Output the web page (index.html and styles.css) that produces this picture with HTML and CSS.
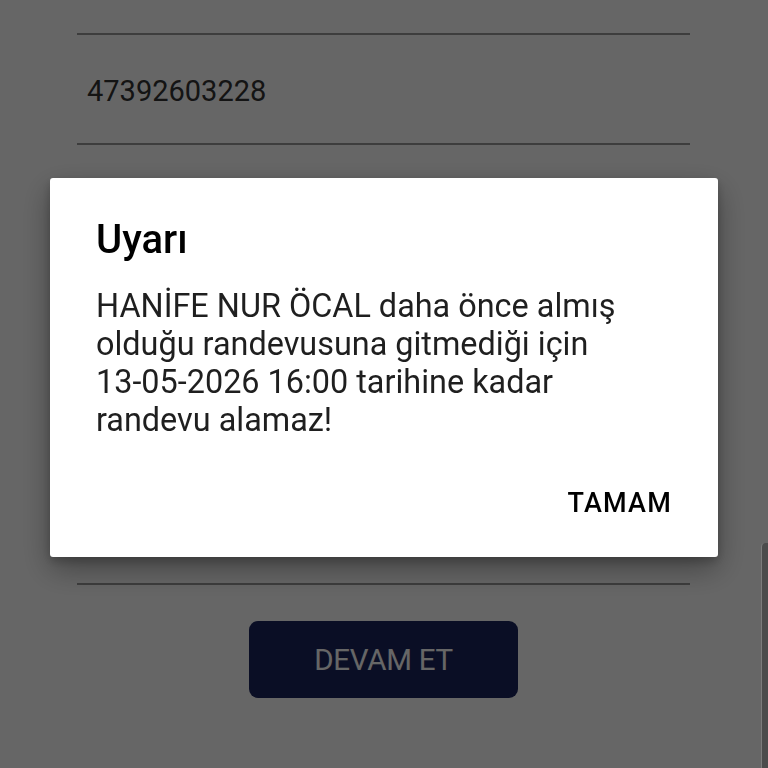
FILE: index.html
```html
<!DOCTYPE html>
<html lang="tr">
<head>
<meta charset="utf-8">
<title>Randevu</title>
<link rel="stylesheet" href="styles.css">
</head>
<body>
<main class="form">
  <div class="field field-top"></div>
  <div class="field field-value"><span class="value">47392603228</span></div>
  <div class="field"></div>
  <div class="field"></div>
  <div class="field"></div>
  <div class="field"></div>
  <div class="actions-row"><button class="btn-primary">DEVAM ET</button></div>
</main>
<div class="scrim"></div>
<div class="edge-panel"></div>
<div class="dialog" role="alertdialog">
  <h2 class="dialog-title">Uyarı</h2>
  <p class="dialog-body">HANİFE NUR ÖCAL daha önce almış<br>olduğu randevusuna gitmediği için<br>13-05-2026 16:00 tarihine kadar<br>randevu alamaz!</p>
  <div class="dialog-actions"><button class="dialog-btn">TAMAM</button></div>
</div>
</body>
</html>
```
FILE: styles.css
```css
html, body {
  margin: 0;
  padding: 0;
  height: 768px;
  overflow: hidden;
  background: #ffffff;
  font-family: Roboto, "Noto Sans", "Liberation Sans", sans-serif;
}

.form {
  padding: 0 78px 0 77px;
  display: flex;
  flex-direction: column;
}

.field {
  height: 108px;
  border-bottom: 2px solid #9a9a9a;
  display: flex;
  align-items: center;
}

.field-top {
  height: 33px;
}

.value {
  padding-left: 10px;
  padding-top: 4px;
  font-size: 29px;
  color: #333333;
}

.actions-row {
  display: flex;
  justify-content: center;
  margin-top: 36px;
}

.btn-primary {
  width: 269px;
  height: 77px;
  border: none;
  border-radius: 9px;
  background: #1b255e;
  color: #ffffff;
  font-family: Roboto, "Liberation Sans", sans-serif;
  font-size: 29.5px;
  letter-spacing: -0.3px;
  padding-top: 2px;
}

.scrim {
  position: fixed;
  inset: 0;
  background: rgba(0, 0, 0, 0.6);
}

.edge-panel {
  position: fixed;
  left: 761px;
  top: 543px;
  width: 7px;
  height: 225px;
  border-left: 1px solid #7c7c7c;
  border-top-left-radius: 4px;
  background: #4c4c4c;
}

.dialog {
  position: fixed;
  left: 50px;
  top: 178px;
  width: 668px;
  height: 379px;
  box-sizing: border-box;
  padding: 40px 46px 0 46px;
  background: #ffffff;
  border-radius: 3px;
  box-shadow: 0 12px 30px rgba(0, 0, 0, 0.35), 0 4px 10px rgba(0, 0, 0, 0.2);
  display: flex;
  flex-direction: column;
}

.dialog-title {
  margin: 0;
  font-size: 40px;
  line-height: 44px;
  font-weight: 500;
  color: #000000;
}

.dialog-body {
  margin: 25px 0 0 0;
  font-size: 32.4px;
  line-height: 38px;
  color: #1f1f1f;
}

.dialog-actions {
  display: flex;
  justify-content: flex-end;
  margin-top: 49px;
}

.dialog-btn {
  border: none;
  background: transparent;
  padding: 0;
  font-family: Roboto, "Liberation Sans", sans-serif;
  font-size: 27px;
  line-height: 30px;
  font-weight: 500;
  letter-spacing: 1.2px;
  color: #000000;
}
```
